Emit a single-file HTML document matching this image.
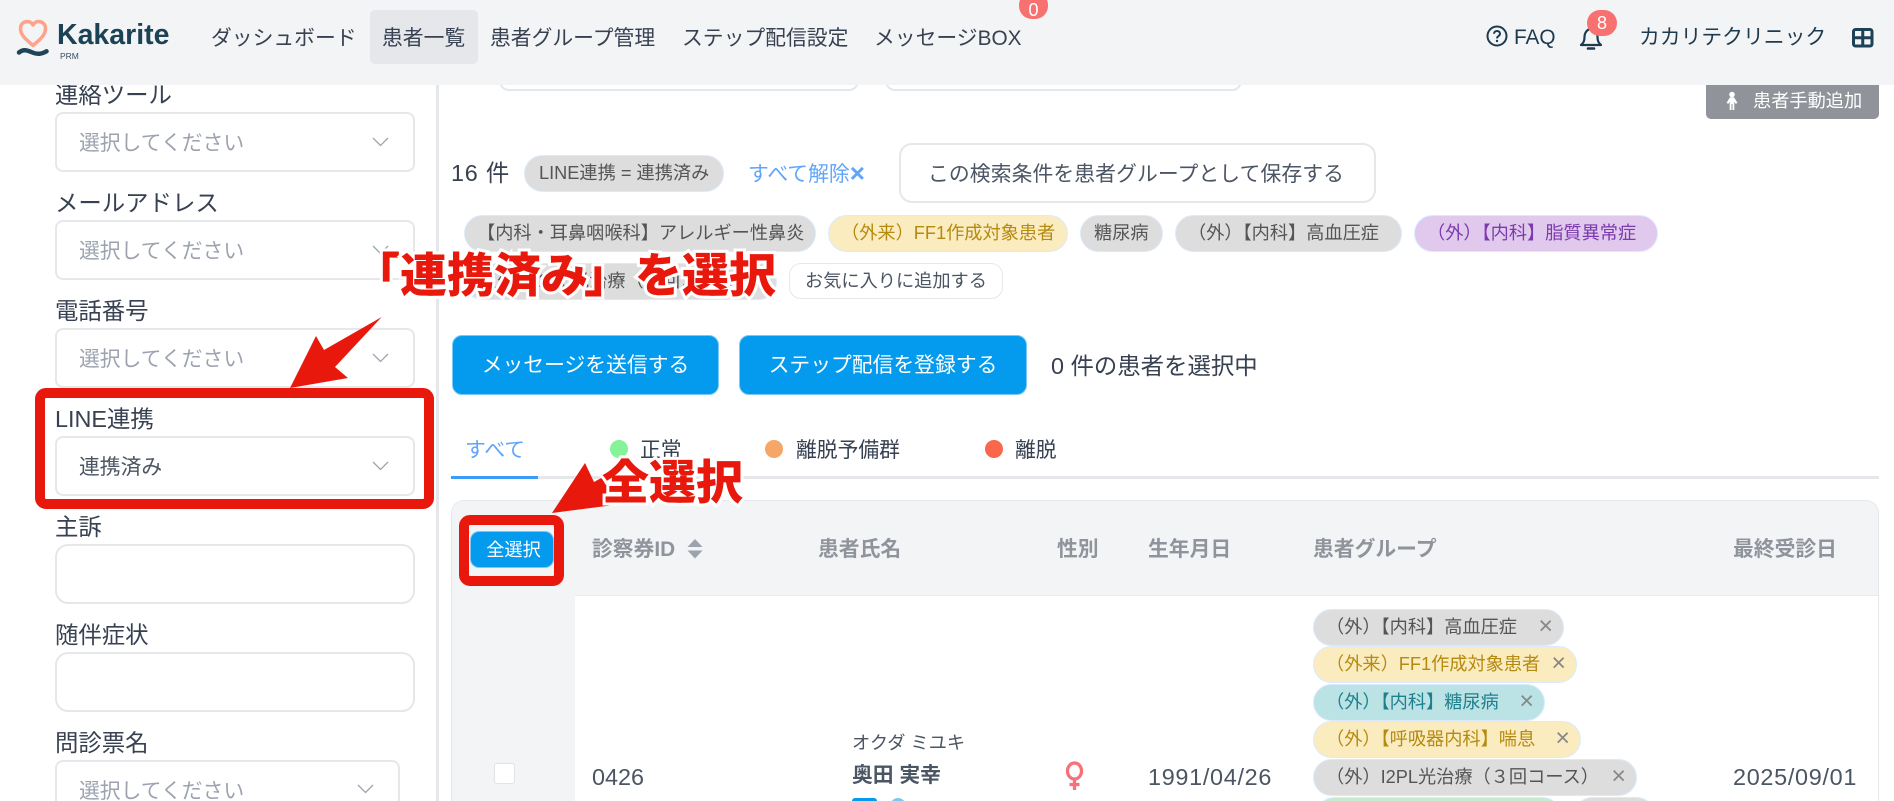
<!DOCTYPE html>
<html lang="ja"><head><meta charset="utf-8"><title>Kakarite</title>
<style>
html,body{margin:0;padding:0;width:1894px;height:801px;overflow:hidden;background:#fff}
body{position:relative;font-family:"Liberation Sans","Noto Sans CJK JP",sans-serif;color:#374151}
.t,.box,.tag,svg.a{position:absolute}
.t{white-space:nowrap;line-height:30px;font-size:20.8px}
.nav{color:#374151;top:24px}
.lb{font-size:23.4px;left:55px;color:#374151;line-height:30px}
.box{background:#fff;border:2px solid #e5e7eb;border-radius:8px;box-sizing:border-box;left:55px;width:360px;height:60px}
.ph{left:79px;color:#9ca3af}
.tag{box-sizing:border-box;height:37px;border-radius:19px;border:1.5px solid #dbeafe;font-size:18.2px;line-height:35px;white-space:nowrap;padding-left:12px}
.g{background:#ddd;color:#555}.y{background:#fbecc0;color:#b58a10}.c{background:#bbe2e5;color:#1e808c}.p{background:#e1c9ee;color:#7c3aad}.gr{background:#c8ebd0;color:#2f7d46}
.x{position:absolute;right:10px;top:-1px;color:#888;font-size:25px;font-weight:400}
.th{font-weight:700;color:#8f949c;top:535px}
.btn{position:absolute;box-sizing:border-box;background:#049bee;border-radius:10px;color:#fff;text-align:center;font-size:20.8px;line-height:60px;border:1px solid #7cc8f5}
.red{position:absolute;box-sizing:border-box;border:10px solid #e8190c;border-radius:11px;z-index:8}
.call{position:absolute;z-index:10;color:#e8190c;font-weight:900;line-height:1;white-space:nowrap;-webkit-text-stroke:6px #fff;paint-order:stroke fill}
.dot{position:absolute;width:18px;height:18px;border-radius:50%;top:440px}
</style></head><body>

<!-- sidebar -->
<div style="position:absolute;left:436px;top:85px;width:3px;height:716px;background:#e5e7eb"></div>
<div class="t lb" style="top:80px">連絡ツール</div>
<div class="box" style="top:112px"></div><div class="t ph" style="top:129px">選択してください</div>
<div class="t lb" style="top:188px">メールアドレス</div>
<div class="box" style="top:220px"></div><div class="t ph" style="top:237px">選択してください</div>
<div class="t lb" style="top:296px">電話番号</div>
<div class="box" style="top:328px"></div><div class="t ph" style="top:345px">選択してください</div>
<div class="t lb" style="top:404px">LINE連携</div>
<div class="box" style="top:436px"></div><div class="t" style="left:79px;top:453px;color:#4b5563">連携済み</div>
<div class="t lb" style="top:512px">主訴</div>
<div class="box" style="top:544px;border-radius:13px"></div>
<div class="t lb" style="top:620px">随伴症状</div>
<div class="box" style="top:652px;border-radius:13px"></div>
<div class="t lb" style="top:728px">問診票名</div>
<div class="box" style="top:760px;width:345px;height:70px"></div><div class="t ph" style="top:777px">選択してください</div>
<svg class="a" style="left:0;top:0;z-index:1" width="440" height="801" fill="none" stroke="#9ca3af" stroke-width="1.3">
<path d="M373 138l7.500 7.500 7.500-7.500M373 246l7.500 7.500 7.500-7.500M373 354l7.500 7.500 7.500-7.500M373 462l7.500 7.500 7.500-7.500M358 785l7.500 7.500 7.500-7.500"/></svg>

<!-- top clipped inputs -->
<div class="box" style="left:499px;top:40px;width:360px;height:51px;border-radius:10px"></div>
<div class="box" style="left:885px;top:40px;width:357px;height:51px;border-radius:10px"></div>
<div style="position:absolute;left:1706px;top:80px;width:173px;height:39px;background:#90939a;border-radius:0 0 5px 5px"></div>
<svg class="a" style="left:1724px;top:90px" width="16" height="22" fill="#fff"><circle cx="8" cy="4.500" r="2.800"/><path d="M2.500 13l3.500-5.800h4L13.500 13l-1.900.8-1.300-2V20H8.500v-6h-1v6H5.700v-8.200l-1.300 2z"/></svg>
<div class="t" style="left:1753px;top:86px;font-size:18.2px;color:#fff">患者手動追加</div>

<!-- filter -->
<div class="t" style="left:451px;top:158px;font-size:23.4px;letter-spacing:.8px">16 件</div>
<div class="tag g" style="left:524px;top:155px;width:200px;padding-left:14px">LINE連携 = 連携済み</div>
<div class="t" style="left:748px;top:160px;color:#60a5fa">すべて解除<b style="font-size:26px;line-height:20px;vertical-align:-1px">×</b></div>
<div class="box" style="left:899px;top:143px;width:477px;height:60px;border-radius:13px"></div>
<div class="t" style="left:928px;top:160px;color:#4b5563;letter-spacing:.1px">この検索条件を患者グループとして保存する</div>
<div class="tag g" style="left:464px;top:215px;width:352px">【内科・耳鼻咽喉科】アレルギー性鼻炎</div>
<div class="tag y" style="left:828px;top:215px;width:240px">（外来）FF1作成対象患者</div>
<div class="tag g" style="left:1080px;top:215px;width:83px;padding-left:13px">糖尿病</div>
<div class="tag g" style="left:1175px;top:215px;width:227px">（外）【内科】高血圧症</div>
<div class="tag p" style="left:1414px;top:215px;width:244px">（外）【内科】脂質異常症</div>
<div class="tag g" style="left:464px;top:263px;width:313px;padding-left:14px">（外）I2PL光治療（３回コース）</div>
<div class="box" style="left:789px;top:263px;width:214px;height:36px;border-radius:12px;border-width:1.500px"></div>
<div class="t" style="left:805px;top:266px;font-size:18.2px;color:#4b5563">お気に入りに追加する</div>

<!-- action buttons -->
<div class="btn" style="left:452px;top:335px;width:267px;height:60px">メッセージを送信する</div>
<div class="btn" style="left:739px;top:335px;width:288px;height:60px">ステップ配信を登録する</div>
<div class="t" style="left:1051px;top:351px;font-size:23.4px">0 件の患者を選択中</div>

<!-- tabs -->
<div style="position:absolute;left:451px;top:476px;width:1428px;height:3px;background:#e5e7eb"></div>
<div style="position:absolute;left:451px;top:476px;width:87px;height:3px;background:#3b9cf8"></div>
<div class="t" style="left:465px;top:436px;color:#60a5fa">すべて</div>
<div class="dot" style="left:610px;background:#86f29a"></div><div class="t" style="left:640px;top:436px">正常</div>
<div class="dot" style="left:765px;background:#f6a666"></div><div class="t" style="left:796px;top:436px">離脱予備群</div>
<div class="dot" style="left:985px;background:#f9674c"></div><div class="t" style="left:1015px;top:436px">離脱</div>

<!-- table -->
<div style="position:absolute;left:451px;top:500px;width:1428px;height:320px;box-sizing:border-box;border:1.500px solid #e5e7eb;border-radius:13px;background:#fff;overflow:hidden">
<div style="position:absolute;left:0;top:0;width:100%;height:94px;background:#f3f4f6;border-bottom:1.500px solid #e9ebef"></div>
<div style="position:absolute;left:0;top:0;width:123px;height:100%;background:#f3f4f6"></div></div>
<div class="btn" style="left:470px;top:531px;width:84px;height:37px;font-size:18.2px;line-height:36px;padding-left:3px;border-radius:9px">全選択</div>
<div class="t th" style="left:592px">診察券ID</div>
<svg class="a" style="left:687px;top:538px" width="16" height="22" fill="#9ca3af"><path d="M8 1L15.500 9H.5zM.5 12.500h15L8 20.500z"/></svg>
<div class="t th" style="left:818px">患者氏名</div>
<div class="t th" style="left:1057px">性別</div>
<div class="t th" style="left:1148px">生年月日</div>
<div class="t th" style="left:1313px">患者グループ</div>
<div class="t th" style="left:1733px">最終受診日</div>

<div style="position:absolute;left:494px;top:763px;width:21px;height:21px;box-sizing:border-box;background:#fff;border:1.500px solid #e1e3e8;border-radius:3px"></div>
<div class="t" style="left:592px;top:762px;color:#4b5563;font-size:23.4px">0426</div>
<div class="t" style="left:852px;top:728px;font-size:18.2px;color:#4b5563">オクダ ミユキ</div>
<div class="t" style="left:852px;top:761px;font-weight:700;color:#4b5563">奥田 実幸</div>
<div style="position:absolute;left:852px;top:798px;width:25px;height:12px;background:#049bee;border-radius:3px"></div>
<div style="position:absolute;left:890px;top:798px;width:16px;height:16px;background:#7ec8ef;border-radius:50%"></div>
<svg class="a" style="left:1064px;top:761px" width="22" height="30" fill="none" stroke="#f8717a" stroke-width="3.300"><ellipse cx="10.500" cy="10" rx="7" ry="8"/><path d="M10.500 18v11M5.500 23.500h10"/></svg>
<div class="t" style="left:1148px;top:762px;color:#4b5563;font-size:23.4px;letter-spacing:.7px">1991/04/26</div>
<div class="t" style="left:1733px;top:762px;color:#4b5563;font-size:23.4px;letter-spacing:.7px">2025/09/01</div>

<div class="tag g" style="left:1313px;top:609px;width:251px">（外）【内科】高血圧症<span class="x">×</span></div>
<div class="tag y" style="left:1313px;top:646px;width:264px">（外来）FF1作成対象患者<span class="x">×</span></div>
<div class="tag c" style="left:1313px;top:684px;width:232px">（外）【内科】糖尿病<span class="x">×</span></div>
<div class="tag y" style="left:1313px;top:721px;width:268px">（外）【呼吸器内科】喘息<span class="x">×</span></div>
<div class="tag g" style="left:1313px;top:759px;width:324px">（外）I2PL光治療（３回コース）<span class="x">×</span></div>
<div class="tag gr" style="left:1316px;top:797px;width:245px"></div>
<div class="tag g" style="left:1574px;top:797px;width:81px"></div>

<!-- annotations -->
<div class="red" style="left:35px;top:388px;width:399px;height:121px"></div>
<div class="red" style="left:459px;top:515px;width:105px;height:71px"></div>
<svg class="a" style="left:0;top:0;z-index:9" width="800" height="560" fill="#e8190c">
<path d="M381.700 317L324 350 316 336 290 388 348 378 335 367z"/>
<path d="M552 513L585 463 594 482 630 462 610 492 614 505z"/></svg>
<div class="call" style="left:353px;top:252px;font-size:47px">「</div>
<div class="call" style="left:400px;top:252px;font-size:47px">連携済み</div>
<div class="call" style="left:584px;top:252px;font-size:47px">」</div>
<div class="call" style="left:635px;top:252px;font-size:47px">を選択</div>
<div class="call" style="left:602px;top:459px;font-size:47px">全選択</div>

<!-- header -->
<div style="position:absolute;left:0;top:0;width:1894px;height:85px;background:#f3f4f6;z-index:5;overflow:hidden">
<svg class="a" style="left:16px;top:18px" width="34" height="44" fill="none">
<path d="M17 27.500C12 23 4.500 18 4.500 10.500 4.500 6 8 3.500 11.200 3.500 13.800 3.500 15.800 4.800 17 7 18.200 4.800 20.200 3.500 22.800 3.500 26 3.500 29.500 6 29.500 10.500 29.500 18 22 23 17 27.500z" stroke="#ffa28b" stroke-width="3.500" stroke-linejoin="round"/>
<path d="M3 33.500c4-3.500 8-2.500 13.500 0 5 2.200 9 1.500 14-1.200" stroke="#1f4459" stroke-width="4.500" stroke-linecap="round" transform="translate(0,1)"/></svg>
<div class="t" style="left:57px;top:20px;font-size:28.500px;font-weight:700;color:#1c4256">Kakarite</div>
<div class="t" style="left:60px;top:41px;font-size:8.500px;color:#33505f">PRM</div>
<div class="t nav" style="left:211px">ダッシュボード</div>
<div style="position:absolute;left:370px;top:10px;width:108px;height:54px;background:#e5e7eb;border-radius:5px"></div>
<div class="t nav" style="left:382px">患者一覧</div>
<div class="t nav" style="left:490px">患者グループ管理</div>
<div class="t nav" style="left:682px">ステップ配信設定</div>
<div class="t nav" style="left:874px">メッセージBOX</div>
<div style="position:absolute;left:1019px;top:-8px;width:29px;height:27px;border-radius:13px;background:#f87171;color:#fff;font-size:18px;line-height:36px;text-align:center">0</div>
<svg class="a" style="left:1486px;top:25px" width="22" height="22" fill="none"><circle cx="11" cy="11" r="9.500" stroke="#1f3a4d" stroke-width="2"/><path d="M8 8.800c0-3.800 6-3.800 6 0 0 2.400-3 2.200-3 4.600" stroke="#1f3a4d" stroke-width="2"/><circle cx="11" cy="16" r="1.200" fill="#1f3a4d"/></svg>
<div class="t" style="left:1514px;top:23px;color:#1f3a4d">FAQ</div>
<svg class="a" style="left:1579px;top:24px" width="24" height="26" fill="none" stroke="#1f3a4d" stroke-width="2.200"><path d="M2 21c2.200-2 3.500-3.500 3.500-8 0-4.500 3-8 6.500-8s6.500 3.500 6.500 8c0 4.500 1.300 6 3.500 8z" stroke-linejoin="round"/><path d="M9 24.500h6" stroke-width="2.600" stroke-linecap="round"/></svg>
<div style="position:absolute;left:1587px;top:10px;width:30px;height:26px;border-radius:13px;background:#f87171;color:#fff;font-size:18px;line-height:26px;text-align:center">8</div>
<div class="t" style="left:1639px;top:23px;color:#1f3a4d">カカリテクリニック</div>
<svg class="a" style="left:1852px;top:28px" width="22" height="20" fill="none" stroke="#1c4256" stroke-width="3"><rect x="1.500" y="1.500" width="18.500" height="16.500" rx="2"/><path d="M10.750 1.500v16.500M1.500 9.750h18.500"/></svg>
</div>
</body></html>
